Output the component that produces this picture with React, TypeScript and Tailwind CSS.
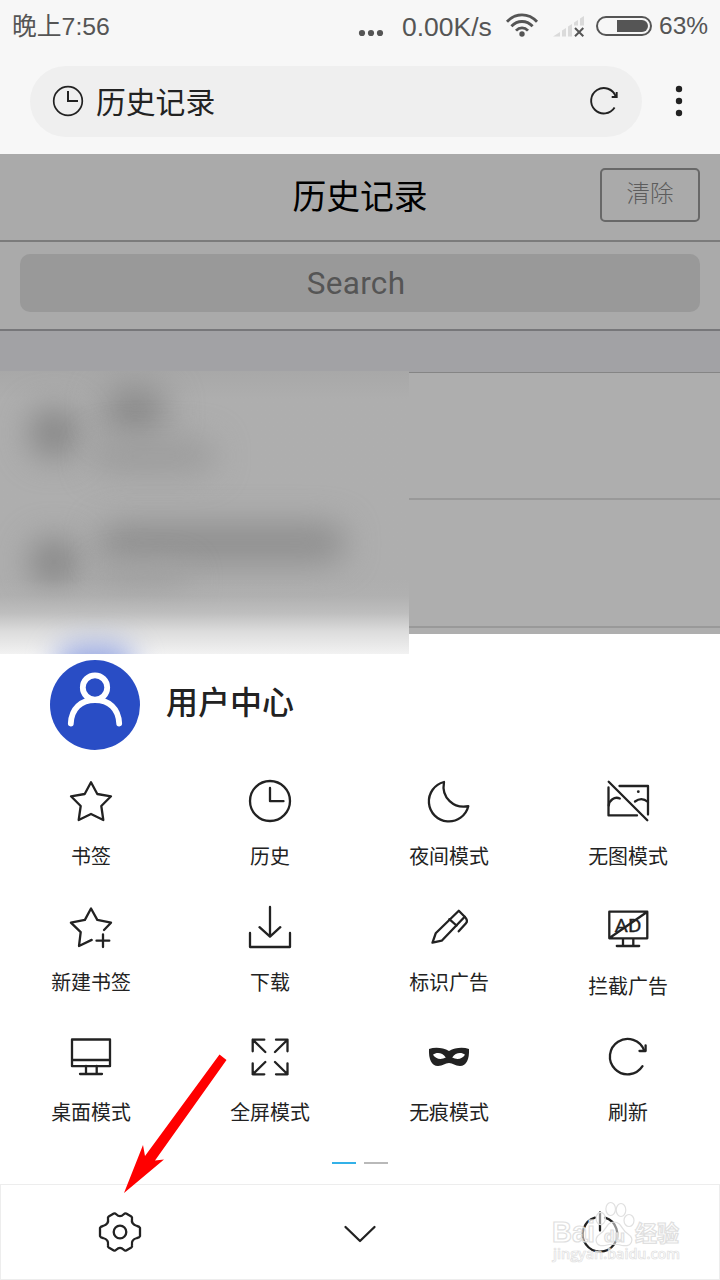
import type { ReactNode } from 'react';

interface MenuItem {
  label: string;
  icon: ReactNode;
  labelClass?: string;
}

const menuItems: MenuItem[] = [
  {
    label: '书签',
    icon: (
      <path d="M24 5.3 30.3 17 44 19.3 34.3 29 36.3 43 24 37 11.7 43 13.7 29 4 19.3 17.7 17Z" />
    ),
  },
  {
    label: '历史',
    icon: (
      <>
        <circle cx="24" cy="24" r="20" />
        <path d="M24 11V24.2H37.5" />
      </>
    ),
  },
  {
    label: '夜间模式',
    icon: <path d="M19 5A20 20 0 1 0 43.3 29.2C29 32 16 21 19 5Z" />,
  },
  {
    label: '无图模式',
    icon: (
      <>
        <path d="M4.7 4.7 43.3 43.3" />
        <path d="M15.5 9H44V37.5M4.5 10.5V38.4H33" />
        <path d="M4.8 28.5C5 23.5 10.5 19 15.8 21.5M31 24.5C35 21.5 40 21.5 44 25" />
        <circle cx="34.3" cy="14.7" r="1.4" fill="currentColor" stroke="none" />
      </>
    ),
  },
  {
    label: '新建书签',
    labelClass: '-mt-px',
    icon: (
      <>
        <path d="M37 26 44 18.7 30.3 15.9 24 4.5 17.9 15.9 3.9 18.7 13.7 28.2 12 42 24.7 35.9" />
        <path d="M29.5 36.7H42.3M36 30.3V43" />
      </>
    ),
  },
  {
    label: '下载',
    labelClass: '-mt-px',
    icon: <path d="M24 3V32.7M13.5 23.2 24 32.7 34.3 23.2M4 29V43H44V29" />,
  },
  {
    label: '标识广告',
    labelClass: '-mt-px',
    icon: (
      <>
        <path d="M7.5 38.7 10.7 29.3 33.8 6.7 39.7 12.7 16.7 36.7Z" />
        <path d="M24.3 15.2 31.5 21.5M39.7 12.7C42.5 15.5 42.8 17.2 41 19.2L33.7 27.3" />
      </>
    ),
  },
  {
    label: '拦截广告',
    labelClass: 'mt-[3px]',
    icon: (
      <>
        <path d="M5.3 7.7H43.3V34.3H5.3ZM19 34.3V42M29.3 34.3V42M12.8 42H35.2M5.5 34 43 8" />
        <text
          x="10.5"
          y="27.8"
          fontSize="19"
          fontFamily="Roboto, sans-serif"
          textLength="27"
          lengthAdjust="spacingAndGlyphs"
          fill="currentColor"
          strokeWidth="0.3"
        >
          AD
        </text>
      </>
    ),
  },
  {
    label: '桌面模式',
    icon: <path d="M5 6.5H43V33.2H5ZM5 27H43M19 33V41M29.7 33V41M13 41H35" />,
  },
  {
    label: '全屏模式',
    icon: (
      <path d="M18.3 6.7H6.7V18.3M6.7 6.7 19.3 19M30 6.7H41.5V18.3M41.5 6.7 29 19M6.7 30.3V41.3H18.3M6.7 41.3 19.3 29M41.5 30.3V41.3H30M41.5 41.3 29 29" />
    ),
  },
  {
    label: '无痕模式',
    icon: (
      <path
        fill="currentColor"
        stroke="none"
        fillRule="evenodd"
        d="M4 16C10 14 18 14.6 24 18C30 14.6 38 14 44 16C44.5 26 41.5 33 35 33C30 33 28 30 24 30C20 30 18 33 13 33C6.5 33 3.5 26 4 16ZM8 21.8C11.5 19 17.5 19.5 20.8 24.5C16.5 27 10.5 26.3 8 21.8ZM40 21.8C36.5 19 30.5 19.5 27.2 24.5C31.5 27 37.5 26.3 40 21.8Z"
      />
    ),
  },
  {
    label: '刷新',
    icon: (
      <>
        <path d="M40.2 17.5A17.7 17.7 0 1 0 38.5 33.2" />
        <path d="M41.6 12.3V18H35.5" />
      </>
    ),
  },
];

function LineIcon({ children }: { children: ReactNode }) {
  return (
    <svg
      viewBox="0 0 48 48"
      className="size-12 shrink-0"
      fill="none"
      stroke="currentColor"
      strokeWidth="2.3"
      strokeLinecap="round"
      strokeLinejoin="round"
    >
      {children}
    </svg>
  );
}

function StatusBar() {
  return (
    <div className="flex h-[54px] items-center text-[#555]">
      <span className="ml-[12px] font-['Liberation_Sans','Noto_Sans_CJK_SC',sans-serif] text-[24.8px] leading-none">
        晚上7:56
      </span>
      <svg viewBox="0 0 26 8" className="mt-[12px] ml-auto h-2 w-[26px]" fill="currentColor">
        <circle cx="4" cy="4" r="3.1" />
        <circle cx="13" cy="4" r="3.1" />
        <circle cx="22" cy="4" r="3.1" />
      </svg>
      <span className="ml-[18px] w-[92px] font-['Liberation_Sans',sans-serif] text-[26.5px] leading-none whitespace-nowrap">
        0.00K/s
      </span>
      <svg
        viewBox="0 0 34 26"
        className="-mt-[4px] ml-[11px] h-[26px] w-[34px]"
        fill="none"
        stroke="currentColor"
        strokeWidth="2.8"
      >
        <path d="M2 9.8C10.5 .6 23.5 .6 32 9.8M6.4 14.3C12.5 7.9 21.5 7.9 27.6 14.3M11 18.6C14.5 14.9 19.5 14.9 23 18.6" />
        <circle cx="17" cy="22" r="2.7" fill="currentColor" stroke="none" />
      </svg>
      <svg viewBox="0 0 32 24" className="ml-[14px] h-6 w-8">
        <path
          fill="#dadada"
          d="M0 21.5 7 17V21.5ZM9 15.5 13 13V21.5H9ZM15 11.5 19 9V21.5H15ZM21 7.5 25 5V10.5H21ZM27 3.5 31 1V10.5H27Z"
        />
        <path d="M22 13 30.3 21.3M30.3 13 22 21.3" stroke="#555" strokeWidth="2" />
      </svg>
      <svg viewBox="0 0 56 20" className="-mt-[3px] ml-[11px] h-5 w-14">
        <rect x="1" y="1" width="54" height="18" rx="9" fill="none" stroke="#555" strokeWidth="2" />
        <path d="M21 4H46A6 6 0 0 1 46 16H21Z" fill="#555" />
      </svg>
      <span className="-mt-[2px] mr-[11px] ml-[7px] w-[50px] font-['Liberation_Sans',sans-serif] text-[24.5px] leading-none">
        63%
      </span>
    </div>
  );
}

function AddressBar() {
  return (
    <div className="flex pt-3">
      <div className="ml-[30px] flex h-[71px] w-[612px] items-center rounded-full bg-[#efefef] pr-[22px] pb-[2px] pl-[22px] text-[#222]">
        <svg viewBox="0 0 32 32" className="size-8" fill="none" stroke="currentColor" strokeWidth="1.7">
          <circle cx="16" cy="16" r="14.3" />
          <path d="M16 6V16H26" strokeWidth="2" />
        </svg>
        <span className="ml-[12px] text-[29.8px] leading-none">历史记录</span>
        <svg viewBox="0 0 32 32" className="ml-auto size-8" fill="none" stroke="currentColor" strokeWidth="1.9">
          <path d="M27.8 11.5A12.7 12.7 0 1 0 26.6 22.5" />
          <path d="M28.7 7V12H23.7" />
        </svg>
      </div>
      <svg viewBox="0 0 8 32" className="mt-[19px] ml-[33px] h-8 w-2" fill="#222">
        <circle cx="4" cy="4" r="3.2" />
        <circle cx="4" cy="16" r="3.2" />
        <circle cx="4" cy="28" r="3.2" />
      </svg>
    </div>
  );
}

function HistoryPage() {
  return (
    <div className="relative h-[480px] bg-[#aeaeae]">
      <div className="grid h-[88px] grid-cols-[1fr_auto_1fr] items-center border-b-2 border-[#7b7b7b] bg-[#aaa] pb-[5px]">
        <h1 className="col-start-2 text-[33.8px] leading-none text-black">历史记录</h1>
        <button className="mr-5 flex h-[54px] w-[100px] items-center justify-center justify-self-end rounded-[5px] border-2 border-[#686868] pb-[4px] text-[23.5px] leading-none font-light text-[#5c5c5c]">
          清除
        </button>
      </div>
      <div className="h-[89px] border-b-2 border-[#77777a] bg-[#aaa] px-5 pt-3">
        <div className="flex h-[58px] items-center justify-center rounded-[10px] bg-[#999] pt-px pr-[8px] font-['Roboto',sans-serif] text-[31.5px] tracking-[0.3px] text-[#555]">
          Search
        </div>
      </div>
      <div className="h-[41px] bg-[#a2a2a5]" />
      <div className="h-[128px] border-t border-b-2 border-t-[#858585] border-b-[#999]" />
      <div className="h-[128px] border-b-2 border-[#999]" />

      {/* Registros difuminados por privacidad */}
      <div className="absolute top-[217px] left-0 z-10 h-[283px] w-[409px] overflow-hidden bg-linear-to-b from-[#a8a8a8] via-[#aeaeae] via-10% to-[#aeaeae]">
        <div className="absolute top-[38px] left-[31px] h-[48px] w-[46px] rounded-full bg-[#808080] blur-[17px]" />
        <div className="absolute top-[18px] left-[104px] h-[44px] w-[62px] rounded-full bg-[#848484] blur-[18px]" />
        <div className="absolute top-[68px] left-[92px] h-[34px] w-[124px] rounded-full bg-[#9c9c9c] blur-[16px]" />
        <div className="absolute top-[168px] left-[31px] h-[46px] w-[46px] rounded-full bg-[#808080] blur-[17px]" />
        <div className="absolute top-[152px] left-[98px] h-[40px] w-[248px] rounded-full bg-[#8f8f8f] blur-[16px]" />
        <div className="absolute top-[196px] left-[98px] h-[28px] w-[90px] rounded-full bg-[#a0a0a0] blur-[16px]" />
        <div className="absolute inset-x-0 bottom-0 h-[75px] bg-[linear-gradient(to_bottom,#b4b4b400_0%,#b4b4b466_22%,#c2c2c2cc_45%,#dcdcdc_70%,#f2f2f2_100%)]" />
        <div className="absolute -bottom-[38px] left-[55px] h-[48px] w-[80px] rounded-full bg-[#98a8e2] blur-[14px]" />
      </div>
    </div>
  );
}

function UserCenter() {
  return (
    <div className="flex items-center pt-[26px] pl-[50px]">
      <svg viewBox="0 0 90 90" className="size-[90px]">
        <circle cx="45" cy="45" r="45" fill="#294dc5" />
        <g fill="none" stroke="#fff" strokeWidth="5.8" strokeLinecap="round">
          <circle cx="45" cy="27.5" r="12.2" />
          <path d="M20.8 63.5C21.5 48.5 31 40 45 40C59 40 68.5 48.5 69.2 63.5" />
        </g>
      </svg>
      <span className="-mt-[10px] ml-[26px] text-[32px] leading-none font-medium text-[#222]">用户中心</span>
    </div>
  );
}

function MenuGrid() {
  return (
    <div className="grid grid-cols-4 grid-rows-[127px_129px_100px] pt-[27px] pr-[3px] pl-px text-[#222]">
      {menuItems.map((item) => (
        <div key={item.label} className="flex flex-col items-center">
          <LineIcon>{item.icon}</LineIcon>
          <div className="h-[17px]" />
          <span className={`pl-px text-[19.9px] leading-7 ${item.labelClass ?? ''}`}>{item.label}</span>
        </div>
      ))}
    </div>
  );
}

function Watermark() {
  return (
    <svg
      viewBox="0 0 140 75"
      className="absolute top-[12px] right-[35px] h-[75px] w-[140px] overflow-visible"
      fill="#fff"
      fillOpacity="0.5"
      stroke="#e0e0e0"
      strokeWidth="1.2"
      fontFamily="'Liberation Sans', 'Noto Sans CJK SC', sans-serif"
    >
      <text x="8" y="45" fontSize="29" fontWeight="700" textLength="43" lengthAdjust="spacingAndGlyphs">
        Bai
      </text>
      <path d="M70 25C62 25 63 33 56 37C49 42 52 50 61 48.5Q70 46 78 48.5C88 50 91 42 84 37C77 33 78 25 70 25Z" />
      <ellipse cx="56.7" cy="21.5" rx="4.6" ry="6.2" />
      <ellipse cx="66.7" cy="12" rx="4.8" ry="6.5" />
      <ellipse cx="77" cy="13" rx="4.8" ry="6.5" />
      <ellipse cx="85" cy="23.5" rx="5" ry="6" />
      <text x="60" y="45" fontSize="17" fontWeight="700">
        du
      </text>
      <text x="91" y="44" fontSize="22" fontWeight="700" textLength="44">
        经验
      </text>
      <text
        x="9"
        y="61.5"
        fontSize="14"
        fontWeight="600"
        strokeWidth="0.7"
        textLength="127"
        lengthAdjust="spacingAndGlyphs"
        fontFamily="'Open Sans', sans-serif"
      >
        jingyan.baidu.com
      </text>
    </svg>
  );
}

function BottomBar() {
  return (
    <div className="relative h-[96px] border border-[#ededed] text-[#222]">
      <div className="-mx-px grid h-full grid-cols-3 items-center justify-items-center pb-px">
        <LineIcon>
          <path d="M17.8 5.5Q19 5 20.2 6.2Q24 10 27.8 6.2Q29 5 30.2 5.5L35.3 8.5Q36.4 9.2 36 10.8Q35 16.5 41 18Q43.5 18.4 44 19.8V28.2Q43.5 29.6 41 30Q35 31.5 36 37.2Q36.4 38.8 35.3 39.5L30.2 42.5Q29 43 27.8 41.8Q24 38 20.2 41.8Q19 43 17.8 42.5L12.7 39.5Q11.6 38.8 12 37.2Q13 31.5 7 30Q4.5 29.6 4 28.2V19.8Q4.5 18.4 7 18Q13 16.5 12 10.8Q11.6 9.2 12.7 8.5Z" />
          <circle cx="24" cy="24" r="6.3" />
        </LineIcon>
        <LineIcon>
          <path d="M9.5 19 24 33 38.5 19" />
        </LineIcon>
        <LineIcon>
          <path d="M19 9.7A17.3 17.3 0 1 0 29 9.7M24 4.5V22.5" />
        </LineIcon>
      </div>
      <Watermark />
    </div>
  );
}

export default function App() {
  return (
    <div className="relative flex h-[1280px] w-[720px] flex-col overflow-hidden bg-white font-['Noto_Sans_CJK_SC',sans-serif]">
      <header className="h-[154px] shrink-0 bg-[#f7f7f7]">
        <StatusBar />
        <AddressBar />
      </header>

      <HistoryPage />

      {/* Menú inferior */}
      <div className="flex flex-1 flex-col">
        <UserCenter />
        <MenuGrid />
        <div className="mt-[29px] flex justify-center gap-2">
          <div className="h-[2px] w-6 bg-[#33b1e8]" />
          <div className="h-[2px] w-6 bg-[#b9b9b9]" />
        </div>
        <div className="mt-auto">
          <BottomBar />
        </div>
      </div>

      {/* Flecha que señala los ajustes */}
      <svg viewBox="0 0 104 140" className="absolute top-[1054px] left-[123px] h-[140px] w-[104px]" fill="#f00">
        <path d="M96.5 .5 103.5 6 32 106.5 41 105.5 1 139 20 91 22 102Z" />
      </svg>
    </div>
  );
}
